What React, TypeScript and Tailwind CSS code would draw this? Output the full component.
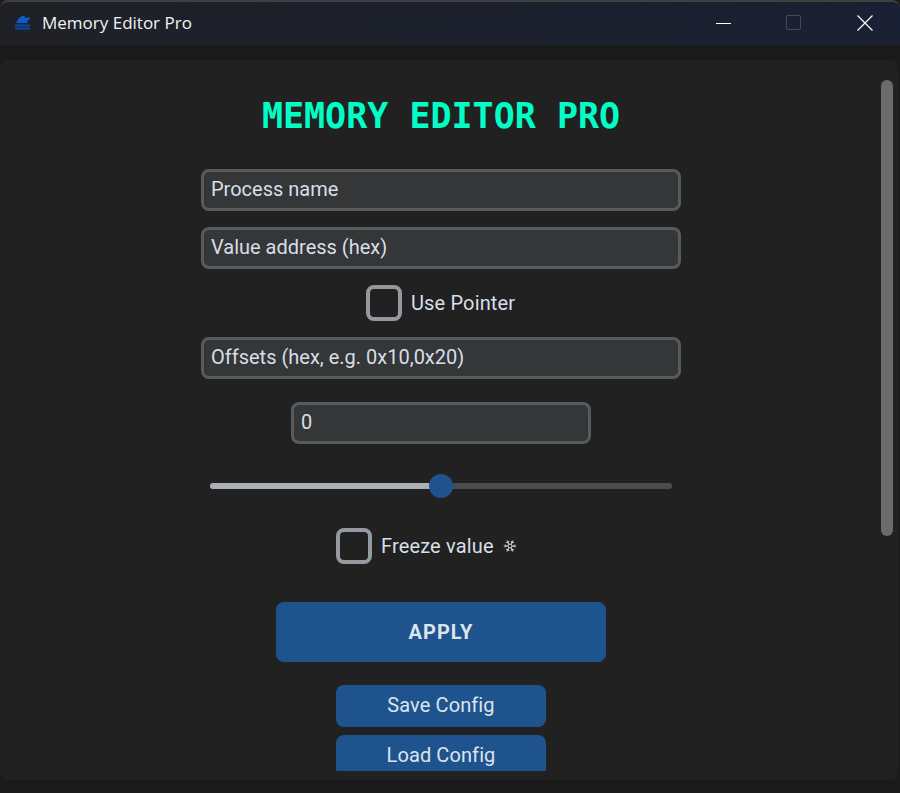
import React from 'react';
import { Snowflake } from 'lucide-react';

function Field({ placeholder, width = 'w-[480px]', value }: { placeholder?: string; width?: string; value?: string }) {
  return (
    <input
      placeholder={placeholder}
      defaultValue={value}
      className={`${width} h-[42px] rounded-[8px] border-[3px] border-[#565b5e] bg-[#343638] px-[7px] pb-[2px] text-[20px] text-[#d8dfe8] placeholder:text-[#d8dfe8] outline-none`}
    />
  );
}

function Check({ label, width, children }: { label: string; width: string; children?: React.ReactNode }) {
  return (
    <label className={`flex items-center ${width}`}>
      <span className="h-[36px] w-[36px] shrink-0 rounded-[8px] border-[4px] border-[#949a9f]" />
      <span className="ml-[9px] text-[20px] leading-[36px] tracking-[0.15px] whitespace-nowrap text-[#d8dfe8]">{label}</span>
      {children}
    </label>
  );
}

export default function App() {
  return (
    <div className="h-[793px] w-[900px] overflow-hidden bg-[#1a1a1a] font-['Roboto',sans-serif]">
      {/* Title bar */}
      <header className="flex h-[45px] items-center rounded-t-[8px] border-t-2 border-[#3f4042] bg-gradient-to-r from-[#1f2126] to-[#1a2033] pb-[2px] pl-[14px]">
        <svg width="17" height="16" viewBox="0 0 17 16" className="shrink-0">
          <path d="M2 8 L5 3 Q7 0.5 10 1 L12 3 L16 2 L15 5 L13 6 L14 8 Z" fill="#0b5cc8" />
          <path d="M1 9.5h15v2H1zM1 12.5h15v2H1z" fill="#0a4aa6" />
        </svg>
        <span className="ml-[11px] font-['Open_Sans',sans-serif] text-[17px] text-[#f2f3f5]">Memory Editor Pro</span>
        <div className="ml-auto flex items-center">
          <svg width="16" height="16" viewBox="0 0 16 16" className="mr-[54px]">
            <path d="M0 8.5h15" stroke="#ffffff" strokeWidth="1" />
          </svg>
          <span className="mr-[56px] h-[15px] w-[15px] rounded-[2px] border border-[#454a58]" />
          <svg width="16" height="16" viewBox="0 0 16 16" className="mr-[27px]">
            <path d="M0.5 0.5l15 15M15.5 0.5l-15 15" stroke="#ffffff" strokeWidth="1.2" />
          </svg>
        </div>
      </header>

      {/* Main panel */}
      <main className="mt-[15px] mr-[2px] flex h-[720px] rounded-[8px] bg-[#212121]">
        <div className="h-[711px] w-[882px] overflow-hidden">
          <div className="flex flex-col items-center">
            <h1 className="mt-[35px] h-[42px] font-['DejaVu_Sans_Mono',monospace] text-[35px] leading-[42px] font-bold text-[#00ffc6]">
              MEMORY EDITOR PRO
            </h1>
            <div className="mt-[32px]"><Field placeholder="Process name" /></div>
            <div className="mt-[16px]"><Field placeholder="Value address (hex)" /></div>
            <div className="mt-[16px]"><Check label="Use Pointer" width="w-[150px]" /></div>
            <div className="mt-[16px]"><Field placeholder="Offsets (hex, e.g. 0x10,0x20)" /></div>
            <div className="mt-[23px]"><Field value="0" width="w-[300px]" /></div>

            {/* Slider */}
            <div className="relative mt-[39px] flex h-[6px] w-[462px] rounded-full bg-[#4a4d50]">
              <div className="h-full w-[231px] rounded-full bg-[#aab0b5]" />
              <span className="absolute top-[-9px] left-[219px] h-[24px] w-[24px] rounded-full bg-[#1f538d]" />
            </div>

            <div className="mt-[39px]">
              <Check label="Freeze value" width="w-[210px]">
                <Snowflake size={14} strokeWidth={1.6} className="ml-[9px] shrink-0 text-[#d8dfe8]" />
              </Check>
            </div>

            <button className="mt-[38px] h-[60px] w-[330px] rounded-[8px] bg-[#1f538d] text-[20px] font-bold tracking-[1px] text-[#dce4ee]">
              APPLY
            </button>
            <button className="mt-[23px] h-[42px] w-[210px] rounded-[8px] bg-[#1f538d] pb-[2px] text-[20px] tracking-[0.1px] text-[#dce4ee]">
              Save Config
            </button>
            <button className="mt-[8px] h-[42px] w-[210px] shrink-0 rounded-[8px] bg-[#1f538d] pb-[2px] text-[20px] tracking-[0.1px] text-[#dce4ee]">
              Load Config
            </button>
          </div>
        </div>
        {/* Scrollbar */}
        <div className="ml-[-1px] pt-[20px]">
          <div className="h-[456px] w-[12px] rounded-full bg-[#6b6b6b]" />
        </div>
      </main>
    </div>
  );
}
